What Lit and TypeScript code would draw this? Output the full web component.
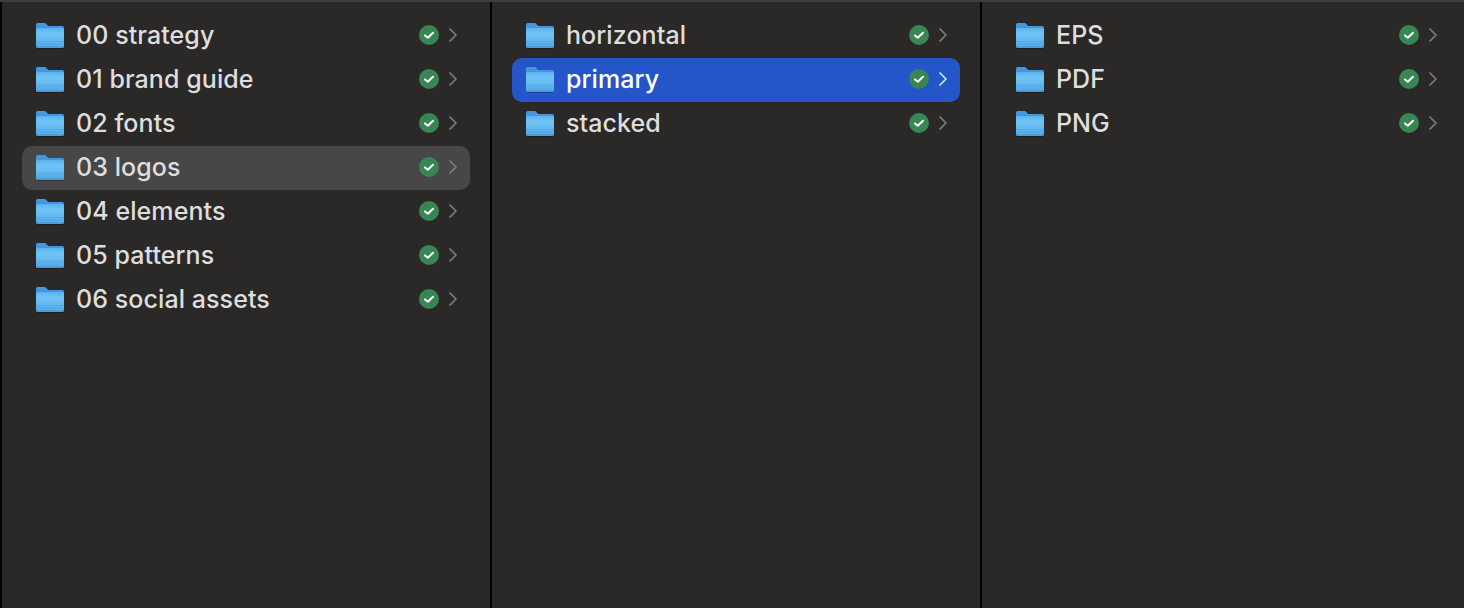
import { LitElement, html, css, svg } from 'lit';
import { customElement } from 'lit/decorators.js';
import { classMap } from 'lit/directives/class-map.js';

type Entry = { name: string; state?: 'active' | 'selected' };

const COLUMNS: Entry[][] = [
  [
    { name: '00 strategy' },
    { name: '01 brand guide' },
    { name: '02 fonts' },
    { name: '03 logos', state: 'active' },
    { name: '04 elements' },
    { name: '05 patterns' },
    { name: '06 social assets' },
  ],
  [
    { name: 'horizontal' },
    { name: 'primary', state: 'selected' },
    { name: 'stacked' },
  ],
  [{ name: 'EPS' }, { name: 'PDF' }, { name: 'PNG' }],
];

const folderIcon = svg`
  <svg class="folder" width="28" height="27" viewBox="0 0 28 27">
    <defs>
      <linearGradient id="fb" x1="0" y1="0" x2="0" y2="1">
        <stop offset="0" stop-color="#5cb3ec"/>
        <stop offset="0.3" stop-color="#70c4f6"/>
        <stop offset="0.75" stop-color="#5db4ec"/>
        <stop offset="1" stop-color="#50a8e4"/>
      </linearGradient>
    </defs>
    <path d="M0 3C0 1.6.8 1 2 1h6.2c1 0 1.5.3 2.1.9l1.5 1.6c.4.4.8.6 1.5.6H26c1.3 0 2 .8 2 2v5H0z" fill="#4596dc"/>
    <path d="M0 7.6c0-1 .7-1.6 1.6-1.6h24.8c.9 0 1.6.6 1.6 1.6V24c0 1.3-.8 2-2 2H2c-1.2 0-2-.7-2-2z" fill="url(#fb)"/>
    <rect x="0" y="19" width="28" height="1" fill="#4a9ce0" opacity=".55"/>
    <rect x="0" y="21.5" width="28" height="1" fill="#4a9ce0" opacity=".4"/>
    <path d="M0 24c0 1.3.8 2 2 2h24c1.2 0 2-.7 2-2z" fill="#4a9ae0"/>
    <rect x="1" y="26" width="26" height="1" fill="#000" opacity=".3"/>
  </svg>`;

const checkBadge = svg`
  <svg class="badge" width="20" height="20" viewBox="0 0 20 20">
    <circle cx="10" cy="10" r="10" fill="#378653"/>
    <path d="M6 10.4l2.8 2.4 5.2-5" fill="none" stroke="#fff" stroke-width="2" stroke-linecap="round" stroke-linejoin="round"/>
  </svg>`;

const chevron = svg`
  <svg class="chevron" width="8" height="14" viewBox="0 0 8 14">
    <path d="M1 1l6 6-6 6" fill="none" stroke="currentColor" stroke-width="1.7" stroke-linecap="round" stroke-linejoin="round"/>
  </svg>`;

@customElement('app-root')
export class AppRoot extends LitElement {
  static styles = css`
    :host {
      display: block;
      width: 1464px;
      height: 608px;
      overflow: hidden;
      background: #2a2928;
      font-family: Inter, "Liberation Sans", sans-serif;
    }

    .browser {
      display: grid;
      grid-template-columns: 490px 490px 490px;
      height: 608px;
      padding-left: 2px;
      box-sizing: border-box;
      background: #000;
      border-top: 2px solid #3e3e3e;
    }

    .column {
      display: flex;
      flex-direction: column;
      padding: 12px 20px 0 20px;
      background: #2a2928;
      border-right: 2px solid #000;
    }

    .row {
      display: flex;
      align-items: center;
      box-sizing: border-box;
      height: 44px;
      flex: none;
      padding: 0 13px 2px 14px;
      border-radius: 10px;
      color: #dedede;
      font-size: 25px;
      font-weight: 450;
      letter-spacing: 0.08px;
    }

    .row.active {
      background: #474747;
    }

    .row.selected {
      background: #2455c9;
      color: #fff;
    }

    .folder {
      flex: none;
      margin-right: 12px;
    }

    .name {
      flex: 1;
      white-space: nowrap;
    }

    .badge {
      flex: none;
      margin-right: 10px;
    }

    .chevron {
      flex: none;
      color: #7c7c7c;
    }

    .row.selected .chevron {
      color: #d6e0f7;
    }
  `;

  render() {
    return html`
      <div class="browser">
        ${COLUMNS.map(
          (entries) => html`
            <div class="column">
              ${entries.map(
                (e) => html`
                  <div class=${classMap({
                    row: true,
                    active: e.state === 'active',
                    selected: e.state === 'selected',
                  })}>
                    ${folderIcon}
                    <span class="name">${e.name}</span>
                    ${checkBadge}${chevron}
                  </div>
                `,
              )}
            </div>
          `,
        )}
      </div>
    `;
  }
}
